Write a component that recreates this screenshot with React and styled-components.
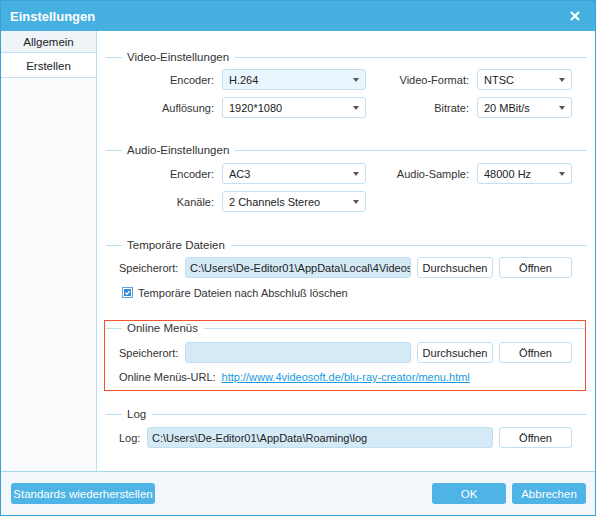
import React from "react";
import styled, { createGlobalStyle } from "styled-components";

const GlobalStyle = createGlobalStyle`
  html, body { margin: 0; padding: 0; background: #fff; }
  body {
    font-family: "Liberation Sans", Arial, sans-serif;
    font-size: 11px;
    color: #333;
  }
  * { box-sizing: border-box; }
`;

const Window = styled.div`
  width: 596px;
  height: 516px;
  border: 1px solid #3d9fd5;
  display: flex;
  flex-direction: column;
  background: #fff;
`;

const TitleBar = styled.div`
  height: 30px;
  flex: none;
  background: #46b0e1;
  color: #fff;
  font-size: 13px;
  font-weight: bold;
  display: flex;
  align-items: center;
  justify-content: space-between;
  padding: 0 15px 0 9px;
`;

const CloseIcon = styled.svg`
  width: 10px;
  height: 10px;
  display: block;
`;

const Body = styled.div`
  flex: 1;
  min-height: 0;
  display: flex;
`;

const Sidebar = styled.div`
  width: 96px;
  flex: none;
  background: #fafcfe;
  border-right: 1px solid #bfe0f2;
  display: flex;
  flex-direction: column;
`;

const Tab = styled.div`
  height: ${(p) => (p.$selected ? 25 : 22)}px;
  background: ${(p) => (p.$selected ? "#fff" : "#eff4f9")};
  border-bottom: 1px solid #c6e2f2;
  color: #222;
  font-size: 11.5px;
  display: flex;
  align-items: center;
  justify-content: center;
  padding-top: ${(p) => (p.$selected ? 2 : 0)}px;
`;

const Main = styled.div`
  flex: 1;
  padding: 19px 8px 0 9px;
  display: flex;
  flex-direction: column;
`;

const Group = styled.div`
  margin-top: ${(p) => p.$top || 0}px;
  ${(p) =>
    p.$highlight
      ? `
    border: 1px solid #f2522a;
    margin-left: -2px;
    margin-right: 1px;
    padding: 0 0 6px 1px;
  `
      : ""}
`;

const GroupHeader = styled.div`
  height: 14px;
  display: flex;
  align-items: center;
  color: #333;
  font-size: 11.5px;
  &::before {
    content: "";
    width: 16px;
    height: 1px;
    background: #bfe0f1;
    margin-right: 5px;
  }
  &::after {
    content: "";
    flex: 1;
    height: 1px;
    background: #bfe0f1;
    margin-left: 6px;
  }
`;

const SettingsGrid = styled.div`
  display: grid;
  grid-template-columns: 108px 144px 1fr 95px;
  grid-auto-rows: 21px;
  column-gap: 8px;
  row-gap: 7px;
  padding-right: 15px;
  margin-top: ${(p) => p.$top}px;
`;

const Label = styled.div`
  text-align: right;
  align-self: center;
  color: #333;
  white-space: nowrap;
`;

const SelectBox = styled.div`
  height: 21px;
  border: 1px solid #c3dff0;
  border-radius: 3px;
  background: ${(p) => (p.$active ? "#eaf6fd" : "#fff")};
  display: flex;
  align-items: center;
  justify-content: space-between;
  padding: 0 6px 0 6px;
  color: #222;
  &::after {
    content: "";
    width: 0;
    height: 0;
    border-left: 3.5px solid transparent;
    border-right: 3.5px solid transparent;
    border-top: 4px solid #555;
  }
`;

const FileRow = styled.div`
  display: grid;
  grid-template-columns: ${(p) => p.$cols};
  grid-template-rows: 21px;
  column-gap: 6px;
  padding-left: 13px;
  padding-right: ${(p) => p.$right || 15}px;
  margin-top: ${(p) => p.$top}px;
`;

const RowLabel = styled.div`
  align-self: center;
  white-space: nowrap;
  color: #333;
`;

const PathField = styled.div`
  height: 21px;
  background: #d5eaf7;
  border: 1px solid #c3def0;
  border-radius: 3px;
  padding: 0 4px;
  color: #222;
  white-space: nowrap;
  overflow: hidden;
  display: flex;
  align-items: center;
`;

const Button = styled.button`
  height: 21px;
  background: #fff;
  border: 1px solid #c3dff0;
  border-radius: 3px;
  font: inherit;
  color: #222;
  padding: 0;
  text-align: center;
`;

const CheckRow = styled.label`
  display: flex;
  align-items: center;
  gap: 5px;
  height: 15px;
  margin-top: 7px;
  padding-left: 16px;
  color: #333;
`;

const CheckIcon = styled.svg`
  width: 11px;
  height: 11px;
  display: block;
`;

const UrlRow = styled.div`
  display: flex;
  gap: 6px;
  height: 14px;
  align-items: center;
  margin-top: 7px;
  padding-left: 13px;
`;

const Link = styled.a`
  color: #1b9be0;
  text-decoration: underline;
  white-space: nowrap;
`;

const Footer = styled.div`
  height: 44px;
  flex: none;
  background: #f3f7fb;
  border-top: 1px solid #a9d6ef;
  display: flex;
  align-items: center;
  gap: 6px;
  padding: 0 9px 0 10px;
`;

const FooterButton = styled.button`
  height: 21px;
  width: ${(p) => p.$w}px;
  background: #4db4e5;
  color: #fff;
  border: none;
  border-radius: 3px;
  font: inherit;
  font-size: 11.5px;
  padding: 0;
  margin-left: ${(p) => (p.$push ? "auto" : "0")};
`;

function Select({ value, active }) {
  return <SelectBox $active={active}>{value}</SelectBox>;
}

export default function App() {
  return (
    <>
      <GlobalStyle />
      <Window>
        <TitleBar>
          <span>Einstellungen</span>
          <CloseIcon viewBox="0 0 10 10">
            <path d="M1 1 L9 9 M9 1 L1 9" stroke="#fff" strokeWidth="2.2" />
          </CloseIcon>
        </TitleBar>
        <Body>
          <Sidebar>
            <Tab>Allgemein</Tab>
            <Tab $selected>Erstellen</Tab>
          </Sidebar>
          <Main>
            <Group>
              <GroupHeader>Video-Einstellungen</GroupHeader>
              <SettingsGrid $top={5}>
                <Label>Encoder:</Label>
                <Select value="H.264" active />
                <Label>Video-Format:</Label>
                <Select value="NTSC" />
                <Label>Auflösung:</Label>
                <Select value="1920*1080" />
                <Label>Bitrate:</Label>
                <Select value="20 MBit/s" />
              </SettingsGrid>
            </Group>

            <Group $top={25}>
              <GroupHeader>Audio-Einstellungen</GroupHeader>
              <SettingsGrid $top={6}>
                <Label>Encoder:</Label>
                <Select value="AC3" />
                <Label>Audio-Sample:</Label>
                <Select value="48000 Hz" />
                <Label>Kanäle:</Label>
                <Select value="2 Channels Stereo" />
              </SettingsGrid>
            </Group>

            <Group $top={26}>
              <GroupHeader>Temporäre Dateien</GroupHeader>
              <FileRow $cols="60px 1fr 76px 73px" $top={5}>
                <RowLabel>Speicherort:</RowLabel>
                <PathField>C:\Users\De-Editor01\AppData\Local\4Videos</PathField>
                <Button>Durchsuchen</Button>
                <Button>Öffnen</Button>
              </FileRow>
              <CheckRow>
                <CheckIcon viewBox="0 0 11 11">
                  <rect x="0.5" y="0.5" width="10" height="10" fill="#fff" stroke="#6f9fd2" />
                  <rect x="2" y="2" width="7" height="7" fill="#2f88dc" />
                  <path d="M3.3 5.6 L4.9 7.2 L7.8 3.8" fill="none" stroke="#fff" strokeWidth="1.3" />
                </CheckIcon>
                Temporäre Dateien nach Abschluß löschen
              </CheckRow>
            </Group>

            <Group $top={20} $highlight>
              <GroupHeader>Online Menüs</GroupHeader>
              <FileRow $cols="60px 1fr 76px 73px" $top={7} $right={13}>
                <RowLabel>Speicherort:</RowLabel>
                <PathField />
                <Button>Durchsuchen</Button>
                <Button>Öffnen</Button>
              </FileRow>
              <UrlRow>
                <RowLabel>Online Menüs-URL:</RowLabel>
                <Link href="#">http://www.4videosoft.de/blu-ray-creator/menu.html</Link>
              </UrlRow>
            </Group>

            <Group $top={16}>
              <GroupHeader>Log</GroupHeader>
              <FileRow $cols="22px 1fr 73px" $top={6}>
                <RowLabel>Log:</RowLabel>
                <PathField>C:\Users\De-Editor01\AppData\Roaming\log</PathField>
                <Button>Öffnen</Button>
              </FileRow>
            </Group>
          </Main>
        </Body>
        <Footer>
          <FooterButton $w={144}>Standards wiederherstellen</FooterButton>
          <FooterButton $w={74} $push>OK</FooterButton>
          <FooterButton $w={74}>Abbrechen</FooterButton>
        </Footer>
      </Window>
    </>
  );
}
